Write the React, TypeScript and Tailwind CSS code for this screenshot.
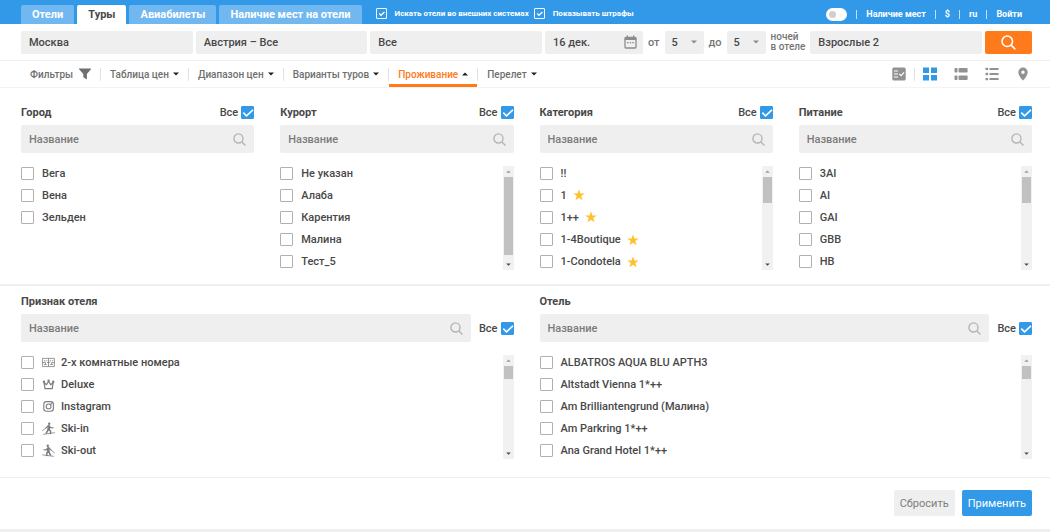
import { useId, type ReactNode } from "react";

type IconProps = { className?: string };

function CheckMark({ className = "" }: IconProps) {
  return (
    <svg viewBox="0 0 13 13" className={className} fill="none" stroke="currentColor" strokeWidth="1.6" aria-hidden="true">
      <path d="M2.3 6.6 5.5 9.8 12 3.8" />
    </svg>
  );
}

function Magnifier({ className = "" }: IconProps) {
  return (
    <svg viewBox="0 0 16 16" className={className} fill="none" stroke="currentColor" aria-hidden="true">
      <circle cx="6.7" cy="6.7" r="5.6" />
      <path d="m10.7 10.7 4.6 4.6" />
    </svg>
  );
}

function Caret({ up = false, className = "" }: IconProps & { up?: boolean }) {
  return (
    <svg viewBox="0 0 6 4" className={className} fill="currentColor" aria-hidden="true">
      <path d={up ? "M0 3.5h6L3 .5z" : "M0 .5h6l-3 3z"} />
    </svg>
  );
}

function Funnel({ className = "" }: IconProps) {
  return (
    <svg viewBox="0 0 12 12" className={className} fill="currentColor" aria-hidden="true">
      <path d="M.3.5h11.4c.3 0 .4.4.2.7L7.9 6v5.6L4.3 9.2V6L.1 1.2C-.1.9 0 .5.3.5z" />
    </svg>
  );
}

function Calendar({ className = "" }: IconProps) {
  return (
    <svg viewBox="0 0 13 14" className={className} fill="none" stroke="currentColor" aria-hidden="true">
      <rect x="1" y="2.4" width="11" height="10.6" rx="1" strokeWidth="1.3" />
      <path d="M.8 3.8h11.4" strokeWidth="2.4" />
      <path d="M3.3.4v2.4M9.7.4v2.4" strokeWidth="1.4" />
      <path d="M3 7.6h7.4" strokeWidth="1.3" strokeDasharray="1.5 1.2" />
    </svg>
  );
}

function Star({ className = "" }: IconProps) {
  return (
    <svg viewBox="0 0 24 24" className={className} fill="currentColor" aria-hidden="true">
      <path d="m12 .6 2.8 8.2h8.7l-7 5.2 2.6 8.5L12 17.4l-7.1 5.1L7.5 14l-7-5.2h8.7z" />
    </svg>
  );
}

const featureIcons: Record<string, ReactNode> = {
  rooms: (
    <g fill="none" stroke="currentColor" strokeWidth="0.8">
      <path d="M.6 2.4h11.8v8.2H.6zM6.5 2.4v8.2M.6 6.6h3M5 6.6h3M9.6 6.6h2.8" />
      <path d="M2 4.8h1.4M4.2 4.8h1.2M7.6 4.8h1.4M9.9 4.8h1.3M2 8.6h2.8M8.2 8.6H11M3.5 6.6v1.6M9.6 6.6v1.6" />
    </g>
  ),
  crown: (
    <g fill="none" stroke="currentColor" strokeWidth="1.2">
      <path d="M3 10.6h7.2l1-6.2-2.5 2.4-2.1-3.6-2.1 3.6L2 4.4z" strokeLinejoin="round" />
      <circle cx="6.6" cy="2.8" r="0.6" fill="currentColor" />
      <circle cx="2" cy="3.8" r="0.6" fill="currentColor" />
      <circle cx="11.2" cy="3.8" r="0.6" fill="currentColor" />
    </g>
  ),
  camera: (
    <g fill="none" stroke="currentColor" strokeWidth="1.1">
      <rect x="1.8" y="1.6" width="9.6" height="9.6" rx="2.7" />
      <circle cx="6.6" cy="6.4" r="2.4" />
      <circle cx="9.4" cy="3.7" r="0.35" fill="currentColor" />
    </g>
  ),
  skiIn: (
    <g fill="none" stroke="currentColor" strokeLinecap="round">
      <circle cx="7.2" cy="1.7" r="1.2" fill="currentColor" stroke="none" />
      <path d="M6.7 4.2v3" strokeWidth="2.6" />
      <path d="m6.4 7.4-2.2 3.8M7 7.4l1.5 1.6v2.4" strokeWidth="1.5" />
      <path d="M5.8 4.2 4 5.8M7.6 4.4l1.3 1.5 2.2-.2" strokeWidth="1.1" />
      <path d="M.6 8.6 4.2 5.8M1.6 12.3l10.8-1.6" strokeWidth="0.8" />
    </g>
  ),
  skiOut: (
    <g fill="none" stroke="currentColor" strokeLinecap="round">
      <circle cx="5.8" cy="1.7" r="1.2" fill="currentColor" stroke="none" />
      <path d="M6.3 4.2v3" strokeWidth="2.6" />
      <path d="m6.6 7.4 1.9 3.8M6 7.4 4.8 9v2.4" strokeWidth="1.5" />
      <path d="m7.2 4.2 1.8 1.7M5.4 4.4 4.1 5.9l-2.2-.2" strokeWidth="1.1" />
      <path d="M12.4 8.8 9 5.9M11.4 12.3.8 10.9" strokeWidth="0.8" />
    </g>
  ),
};

function Tick({ id }: { id: string }) {
  return (
    <span className="grid size-[13px] shrink-0">
      <input
        id={id}
        type="checkbox"
        defaultChecked
        className="peer col-start-1 row-start-1 size-[13px] appearance-none rounded-[1px] border border-[#bdbdbd] bg-white checked:border-[#3199e8] checked:bg-[#3199e8]"
      />
      <CheckMark className="pointer-events-none col-start-1 row-start-1 hidden size-[13px] text-white peer-checked:block" />
    </span>
  );
}

function AllToggle() {
  const id = useId();
  return (
    <div className="flex shrink-0 items-center gap-[3px]">
      <label htmlFor={id}>Все</label>
      <Tick id={id} />
    </div>
  );
}

function NameSearch({ label }: { label: string }) {
  return (
    <div className="flex h-7 min-w-0 flex-1 items-center rounded-[2px] bg-[#efefef] pr-2 pl-2">
      <input
        type="text"
        aria-label={label}
        placeholder="Название"
        className="min-w-0 flex-1 bg-transparent outline-none placeholder:text-[#7b7b7b]"
      />
      <Magnifier className="size-[13px] stroke-[1.7] text-[#b5b5b5]" />
    </div>
  );
}

type Item = { label: string; star?: boolean; icon?: string };

function OptionRow({ item }: { item: Item }) {
  return (
    <li className="flex items-center">
      <label className="flex items-center gap-2">
        <input
          type="checkbox"
          className="size-[13px] appearance-none rounded-[1px] border border-[#b0b0b0] bg-white checked:bg-[#3199e8]"
        />
        {item.icon && (
          <svg viewBox="0 0 13 13" className="-mr-[2px] size-[13px] text-[#7d7d7d]" aria-hidden="true">
            {featureIcons[item.icon]}
          </svg>
        )}
        <span>{item.label}</span>
      </label>
      {item.star && <Star className="ml-1.5 size-3 text-[#fdc02f]" />}
    </li>
  );
}

function OptionList({ items, thumb }: { items: Item[]; thumb?: number }) {
  return (
    <div className="mt-[9px] flex justify-between">
      <ul className="grid h-[111px] grid-rows-5">
        {items.map((item) => (
          <OptionRow key={item.label} item={item} />
        ))}
      </ul>
      {thumb !== undefined && (
        <div className="mt-[4px] mb-[3px] flex w-[11px] flex-col items-center bg-[#f1f1f1]" aria-hidden="true">
          <Caret up className="my-1 h-[3px] w-[5px] text-[#9a9a9a]" />
          <span className="w-[9px] bg-[#c1c1c1]" style={{ height: thumb }} />
          <Caret className="mt-auto mb-1 h-[3px] w-[5px] text-[#444]" />
        </div>
      )}
    </div>
  );
}

function Panel({ title, items, thumb }: { title: string; items: Item[]; thumb?: number }) {
  return (
    <section className="min-w-0">
      <div className="mb-[6px] flex h-[13px] items-center justify-between">
        <h2 className="font-bold">{title}</h2>
        <AllToggle />
      </div>
      <div className="flex">
        <NameSearch label={title} />
      </div>
      <OptionList items={items} thumb={thumb} />
    </section>
  );
}

function WidePanel({ title, items, thumb }: { title: string; items: Item[]; thumb: number }) {
  return (
    <section className="min-w-0">
      <h2 className="mb-[6px] h-[13px] leading-[13px] font-bold">{title}</h2>
      <div className="flex items-center gap-2">
        <NameSearch label={title} />
        <AllToggle />
      </div>
      <OptionList items={items} thumb={thumb} />
    </section>
  );
}

function HeaderCheck({ label }: { label: string }) {
  return (
    <label className="flex items-center gap-2">
      <span className="grid size-[11px]">
        <input
          type="checkbox"
          defaultChecked
          className="peer col-start-1 row-start-1 size-[11px] appearance-none rounded-[1px] border border-white"
        />
        <CheckMark className="pointer-events-none col-start-1 row-start-1 m-[2px] hidden size-[7px] stroke-[2.4] peer-checked:block" />
      </span>
      <span>{label}</span>
    </label>
  );
}

function Nights({ label }: { label: string }) {
  const id = useId();
  return (
    <>
      <label htmlFor={id} className="mx-[2px] text-[#757575]">
        {label}
      </label>
      <span className="grid w-[39px] items-center rounded-[2px] bg-[#efefef]">
        <select id={id} className="col-start-1 row-start-1 h-[23px] appearance-none bg-transparent pl-[7px] outline-none">
          <option>5</option>
          <option>6</option>
          <option>7</option>
        </select>
        <Caret className="pointer-events-none col-start-1 row-start-1 mr-[7px] h-1 w-1.5 justify-self-end text-[#8c8c8c]" />
      </span>
    </>
  );
}

function Divider({ className = "" }: IconProps) {
  return <span className={`w-px shrink-0 ${className}`} aria-hidden="true" />;
}

const tabs = ["Отели", "Туры", "Авиабилеты", "Наличие мест на отели"];
const sections = ["Таблица цен", "Диапазон цен", "Варианты туров", "Проживание", "Перелет"];
const account = ["Наличие мест", "$", "ru", "Войти"];
const plain = (...labels: string[]): Item[] => labels.map((label) => ({ label }));

const fieldClass = "h-[23px] min-w-0 flex-1 rounded-[2px] bg-[#efefef] px-2 outline-none";

export default function App() {
  return (
    <div className="min-h-screen bg-[#efefef] font-['Roboto',sans-serif] text-[11px] leading-[13px] font-medium text-[#484848]">
      <div className="bg-white">
        <header className="flex h-6 justify-between bg-[#3199e8] pr-7 pl-[21px] text-[9px] font-bold text-white">
          <div className="flex">
            <nav className="mt-[5px] flex gap-[3px] text-[11px]">
              {tabs.map((tab) => (
                <a
                  key={tab}
                  href="#"
                  className={
                    tab === "Туры"
                      ? "flex items-center rounded-t-[2px] bg-white px-[11px] text-[#484848]"
                      : "flex items-center rounded-t-[2px] bg-[#72b8f0] px-[11px]"
                  }
                >
                  {tab}
                </a>
              ))}
            </nav>
            <div className="mt-[2px] ml-[14px] flex items-center gap-[5px] text-[8px]">
              <HeaderCheck label="Искать отели во внешних системах" />
              <HeaderCheck label="Показывать штрафы" />
            </div>
          </div>
          <div className="mt-[5px] flex items-center gap-[9px]">
            <input
              type="checkbox"
              role="switch"
              aria-label="Наличие мест"
              className="h-[13px] w-[21px] appearance-none rounded-full border-[3px] border-white bg-white before:block before:size-[7px] before:rounded-full before:bg-[#cfcfcf]"
            />
            {account.map((entry) => (
              <div key={entry} className="flex items-center gap-[9px]">
                <Divider className="h-[9px] bg-white/70" />
                <a href="#">{entry}</a>
              </div>
            ))}
          </div>
        </header>

        <form className="flex h-[37px] items-center gap-[3px] border-b border-[#efefef] pr-[18px] pl-[21px]">
          <input type="text" aria-label="Город вылета" defaultValue="Москва" className={fieldClass} />
          <input type="text" aria-label="Страна" defaultValue="Австрия – Все" className={fieldClass} />
          <input type="text" aria-label="Тур" defaultValue="Все" className={fieldClass} />
          <div className="flex h-[23px] w-[98px] items-center rounded-[2px] bg-[#efefef] pr-[6px] pl-2">
            <input type="text" aria-label="Дата" defaultValue="16 дек." className="min-w-0 flex-1 bg-transparent outline-none" />
            <Calendar className="h-[14px] w-[13px] text-[#8c8c8c]" />
          </div>
          <Nights label="от" />
          <Nights label="до" />
          <span className="mx-[2px] text-[10px] leading-[10px] text-[#757575]">
            ночей
            <br />в отеле
          </span>
          <input type="text" aria-label="Туристы" defaultValue="Взрослые 2" className={fieldClass} />
          <button
            type="button"
            aria-label="Найти"
            className="flex h-[23px] w-[47px] items-center justify-center rounded-[2px] bg-[#ff7a1a] text-white"
          >
            <Magnifier className="size-[15px] stroke-[1.7]" />
          </button>
        </form>

        <div className="flex h-[27px] justify-between border-b border-[#f3f3f3] pr-5 pl-[21px] text-[#6f6f6f]">
          <div className="flex items-center text-[10px]">
            <button type="button" className="flex h-full items-center gap-[6px] px-[9px]">
              Фильтры
              <Funnel className="size-3" />
            </button>
            {sections.map((name) => {
              const open = name === "Проживание";
              return (
                <div key={name} className="flex h-full items-center">
                  <Divider className="h-[13px] bg-[#e2e2e2]" />
                  <button
                    type="button"
                    className={
                      open
                        ? "flex h-full items-center gap-[4px] border-b-3 border-[#ff7a1a] px-[9px] pt-[3px] text-[#ff7a1a]"
                        : "flex h-full items-center gap-[4px] px-[9px]"
                    }
                  >
                    {name}
                    <Caret up={open} className="h-1 w-1.5 text-[#222]" />
                  </button>
                </div>
              );
            })}
          </div>
          <div className="flex items-center gap-[17px] text-[#929292]">
            <div className="flex items-center gap-2">
              <button type="button" aria-label="Сравнение">
                <svg viewBox="0 0 14 14" className="size-[14px]">
                  <rect x="0.3" y="0.5" width="13.4" height="13" rx="1.6" fill="currentColor" />
                  <path d="M2 4h4M2 7h4M2 10h4M7.3 6.8l1.8 1.8 3-3.2" fill="none" stroke="#fff" strokeWidth="1.2" />
                </svg>
              </button>
              <Divider className="h-[13px] bg-[#e2e2e2]" />
              <button type="button" aria-label="Плитка" className="text-[#3199e8]">
                <svg viewBox="0 0 14 14" className="size-[14px]" fill="currentColor">
                  <path d="M0 .5h6V6H0zM8 .5h6V6H8zM0 8h6v5.5H0zM8 8h6v5.5H8z" />
                </svg>
              </button>
            </div>
            <button type="button" aria-label="Крупный список">
              <svg viewBox="0 0 14 14" className="size-[14px]" fill="currentColor">
                <rect x="0.5" y="1" width="3" height="4.6" rx="0.8" />
                <rect x="4.6" y="1" width="9" height="4.6" rx="0.8" />
                <rect x="0.5" y="8.4" width="3" height="4.6" rx="0.8" />
                <rect x="4.6" y="8.4" width="9" height="4.6" rx="0.8" />
              </svg>
            </button>
            <button type="button" aria-label="Список">
              <svg viewBox="0 0 14 14" className="size-[14px]" fill="currentColor">
                <rect x="0.5" y="0.7" width="2.6" height="2.4" rx="0.6" />
                <rect x="4.4" y="1" width="9.3" height="1.9" rx="0.6" />
                <rect x="0.5" y="5.8" width="2.6" height="2.4" rx="0.6" />
                <rect x="4.4" y="6" width="9.3" height="1.9" rx="0.6" />
                <rect x="0.5" y="10.9" width="2.6" height="2.4" rx="0.6" />
                <rect x="4.4" y="11.1" width="9.3" height="1.9" rx="0.6" />
              </svg>
            </button>
            <button type="button" aria-label="Карта">
              <svg viewBox="0 0 14 14" className="size-[14px]" fill="currentColor" fillRule="evenodd">
                <path d="M7 .5a4.7 4.7 0 0 0-4.7 4.7C2.3 8.7 7 13.6 7 13.6s4.7-4.9 4.7-8.4A4.7 4.7 0 0 0 7 .5zm0 3a1.7 1.7 0 1 1 0 3.4 1.7 1.7 0 0 1 0-3.4z" />
              </svg>
            </button>
          </div>
        </div>

        <main>
          <div className="grid grid-cols-4 gap-[26px] border-b-2 border-[#efefef] pt-[18px] pr-[18px] pb-[11px] pl-[21px]">
            <Panel title="Город" items={plain("Вега", "Вена", "Зельден")} />
            <Panel title="Курорт" thumb={78} items={plain("Не указан", "Алаба", "Карентия", "Малина", "Тест_5")} />
            <Panel
              title="Категория"
              thumb={26}
              items={[
                { label: "!!" },
                { label: "1", star: true },
                { label: "1++", star: true },
                { label: "1-4Boutique", star: true },
                { label: "1-Condotela", star: true },
              ]}
            />
            <Panel title="Питание" thumb={26} items={plain("3AI", "AI", "GAI", "GBB", "HB")} />
          </div>
          <div className="grid grid-cols-2 gap-[26px] border-b border-[#efefef] pt-[9px] pr-[18px] pb-[15px] pl-[21px]">
            <WidePanel
              title="Признак отеля"
              thumb={13}
              items={[
                { label: "2-х комнатные номера", icon: "rooms" },
                { label: "Deluxe", icon: "crown" },
                { label: "Instagram", icon: "camera" },
                { label: "Ski-in", icon: "skiIn" },
                { label: "Ski-out", icon: "skiOut" },
              ]}
            />
            <WidePanel
              title="Отель"
              thumb={13}
              items={plain(
                "ALBATROS AQUA BLU APTH3",
                "Altstadt Vienna 1*++",
                "Am Brilliantengrund (Малина)",
                "Am Parkring 1*++",
                "Ana Grand Hotel 1*++",
              )}
            />
          </div>
        </main>

        <footer className="flex justify-end gap-[7px] pt-3 pr-[18px] pb-[13px] font-normal">
          <button type="reset" className="h-[26px] rounded-[2px] bg-[#efefef] px-[6px] text-[#7d7d7d]">
            Сбросить
          </button>
          <button type="submit" className="h-[26px] rounded-[2px] bg-[#3199e8] px-[6px] text-white">
            Применить
          </button>
        </footer>
      </div>
    </div>
  );
}
